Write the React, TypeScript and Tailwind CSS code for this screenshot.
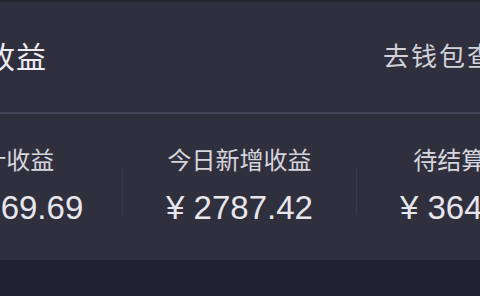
import React from "react";

const stats = [
  { label: "累计收益", value: "13169.69", shift: "mr-[11px]" },
  { label: "今日新增收益", value: "2787.42", shift: "" },
  { label: "待结算收益", value: "3648.20", shift: "" },
];

export default function App() {
  return (
    <div
      className="w-[480px] h-[296px] overflow-hidden bg-[#232230]"
      style={{ fontFamily: '"Noto Sans CJK SC", "Noto Sans", sans-serif' }}
    >
      <div className="h-[260px] bg-[#302f3e] border-t-2 border-[#27262f] flex flex-col">
        <div className="h-[110px] pb-[4px] flex items-center whitespace-nowrap">
          <div className="-ml-[77px] text-[30px] leading-none text-[#ededf2] tracking-[1px]">
            我的收益
          </div>
          <div className="flex-1" />
          <div className="w-[97px] shrink-0 overflow-visible text-[26px] leading-none text-[#d2d2da] tracking-[2px]">
            去钱包查看
          </div>
        </div>
        <div className="h-[2px] bg-[#444357]" />
        <div className="flex w-[700px] -ml-[110px] pt-[30px]">
          {stats.map((s, i) => (
            <div key={s.label} className="flex-1 flex items-center">
              <div className="flex-1 flex flex-col items-center">
                <div className="text-[24px] leading-[30px] text-[#d6d6dd] whitespace-nowrap">
                  {s.label}
                </div>
                <div
                  className={`mt-[15px] text-[33px] leading-[38px] text-[#e6e6ec] whitespace-nowrap ${s.shift}`}
                  style={{ fontFamily: '"Liberation Sans", "Noto Sans CJK SC", sans-serif' }}
                >
                  ¥&nbsp;{s.value}
                </div>
              </div>
              {i < 2 && <div className="w-[1px] h-[46px] mt-[10px] bg-[#3a394a]" />}
            </div>
          ))}
        </div>
      </div>
    </div>
  );
}
